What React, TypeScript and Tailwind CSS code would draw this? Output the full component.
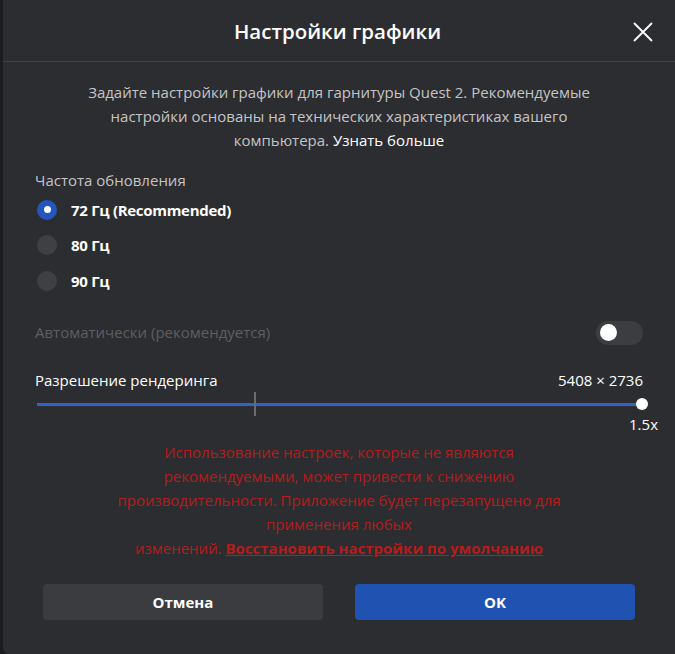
import React from 'react';

const font = { fontFamily: '"Open Sans", "Noto Sans", sans-serif' };

const Radio = ({ checked, label }: { checked?: boolean; label: string }) => (
  <div className="flex items-center h-[35.5px]">
    {checked ? (
      <div className="w-5 h-5 rounded-full bg-[#2456be] flex items-center justify-center">
        <div className="w-[7px] h-[7px] rounded-full bg-white" />
      </div>
    ) : (
      <div className="w-5 h-5 rounded-full bg-[#3f4043]" />
    )}
    <span className="ml-[14px] text-[15px] font-bold text-white tracking-[-0.3px]">{label}</span>
  </div>
);

const App = () => {
  return (
    <div className="w-[675px] h-[654px] bg-[#1c1c1e] overflow-hidden" style={font}>
      <div className="h-full ml-[3px] bg-[#2c2d30] rounded-bl-[6px] flex flex-col">
        <div className="relative h-[62px] flex items-center justify-center border-b border-[#404145]">
          <h1 className="text-[20.5px] font-semibold text-white mt-[2px] mr-[3px]">Настройки графики</h1>
          <button className="absolute right-[21px] top-[21px] text-white">
            <svg width="22" height="22" viewBox="0 0 22 22" fill="none" stroke="currentColor" strokeWidth="1.8">
              <path d="M2 2L20 20M20 2L2 20" />
            </svg>
          </button>
        </div>

        <p className="mt-[18px] px-[40px] text-center text-[15px] leading-6 text-[#c4c4c6]">
          Задайте настройки графики для гарнитуры Quest 2. Рекомендуемые
          <br />
          настройки основаны на технических характеристиках вашего
          <br />
          компьютера. <span className="text-white">Узнать больше</span>
        </p>

        <div className="pl-[32px] pr-[32px]">
          <div className="mt-[16px] text-[15px] text-[#c4c4c6] leading-6">Частота обновления</div>
          <div className="pl-[2px]">
            <Radio checked label="72 Гц (Recommended)" />
            <Radio label="80 Гц" />
            <Radio label="90 Гц" />
          </div>

          <div className="mt-[22px] flex items-center justify-between">
            <span className="text-[15px] text-[#5d5e62]">Автоматически (рекомендуется)</span>
            <div className="w-[47px] h-[24px] rounded-full bg-[#3c3d41] flex items-center px-[4px]">
              <div className="w-[17px] h-[17px] rounded-full bg-white" />
            </div>
          </div>

          <div className="mt-[24px] flex items-center justify-between text-[15px] text-white">
            <span>Разрешение рендеринга</span>
            <span>5408 × 2736</span>
          </div>

          <div className="relative h-[26px] ml-[2px] flex items-center">
            <div className="w-full h-[3px] bg-[#2f63c9]" />
            <div className="absolute left-[217px] top-[1px] w-[2px] h-[24px] bg-[#6a6b6f]" />
            <div className="absolute right-[-5px] top-[7px] w-[12px] h-[12px] rounded-full bg-white" />
          </div>
          <div className="flex justify-end mt-[-2px] mr-[-15px] text-[15px] text-white leading-[18px]">1.5x</div>
        </div>

        <p className="mt-[7px] px-[80px] text-center text-[15px] leading-6 text-[#b51c1c]">
          Использование настроек, которые не являются
          <br />
          рекомендуемыми, может привести к снижению
          <br />
          производительности. Приложение будет перезапущено для
          <br />
          применения любых
          <br />
          изменений. <span className="font-bold underline">Восстановить настройки по умолчанию</span>
        </p>

        <div className="mt-[24px] px-[40px] grid grid-cols-2 gap-[32px]">
          <button className="h-[36px] rounded-[4px] bg-[#3b3c3f] text-white text-[15px] font-bold">Отмена</button>
          <button className="h-[36px] rounded-[4px] bg-[#1f52b1] text-white text-[15px] font-bold">OK</button>
        </div>
      </div>
    </div>
  );
};

export default App;
